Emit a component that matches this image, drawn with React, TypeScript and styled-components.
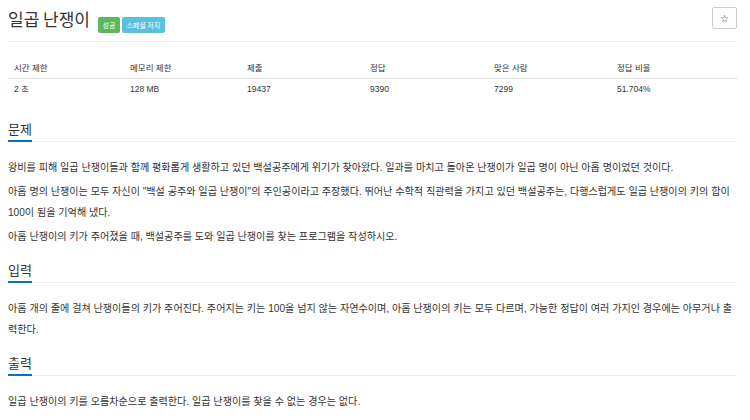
import React from "react";
import styled, { createGlobalStyle } from "styled-components";

const GlobalStyle = createGlobalStyle`
  html, body {
    margin: 0;
    padding: 0;
    background: #ffffff;
  }
  body {
    font-family: "Liberation Sans", "Noto Sans CJK KR", sans-serif;
    color: #333333;
  }
`;

const Page = styled.div`
  width: 750px;
  padding: 0 13px 0 8px;
  box-sizing: border-box;
`;

const Header = styled.div`
  display: flex;
  align-items: center;
  justify-content: space-between;
  padding-top: 7px;
  height: 22px;
`;

const TitleRow = styled.div`
  display: flex;
  align-items: baseline;
  gap: 2px;
`;

const Title = styled.h1`
  margin: 0 6px 0 0;
  font-family: "Noto Sans CJK KR", sans-serif;
  font-size: 17px;
  font-weight: 400;
  line-height: 22px;
  color: #333333;
  position: relative;
  top: 1px;
`;

const Label = styled.span<{ $tone: "success" | "info" }>`
  display: inline-flex;
  align-items: center;
  height: 16px;
  padding: 0 4.5px;
  border-radius: 2px;
  font-family: "Noto Sans CJK KR", sans-serif;
  font-size: 7px;
  color: #ffffff;
  background: ${(p) => (p.$tone === "success" ? "#5cb85c" : "#5bc0de")};
  position: relative;
  top: 3px;
`;

const StarButton = styled.button`
  width: 25px;
  height: 22px;
  padding: 0;
  border: 1px solid #cccccc;
  border-radius: 2px;
  background: #ffffff;
  font-family: "DejaVu Sans", sans-serif;
  font-size: 10px;
  color: #222222;
  display: flex;
  align-items: center;
  justify-content: center;
`;

const Rule = styled.hr`
  margin: 12px 0 0;
  border: 0;
  border-top: 1px solid #eeeeee;
`;

const InfoTable = styled.table`
  width: 100%;
  margin: 16px 0 21px;
  border-collapse: collapse;
  table-layout: fixed;
  font-size: 8.5px;
`;

const Col = styled.col<{ $w?: number }>`
  width: ${(p) => (p.$w ? `${p.$w}px` : "auto")};
`;

const Th = styled.th`
  text-align: left;
  font-weight: 400;
  padding: 4px 6px;
  line-height: 12px;
  border-bottom: 1px solid #dddddd;
`;

const Td = styled.td`
  padding: 4px 6px;
  line-height: 12px;
`;

const Section = styled.section`
  margin-top: 14px;
`;

const Headline = styled.div`
  border-bottom: 1px solid #eeeeee;
  margin-bottom: 15px;
`;

const HeadlineText = styled.h2`
  display: inline-block;
  margin: 0 0 -1px;
  padding-bottom: 2px;
  font-family: "Noto Sans CJK KR", sans-serif;
  font-size: 13px;
  font-weight: 400;
  line-height: 18px;
  color: #333333;
  border-bottom: 2px solid #0076c0;
`;

const Para = styled.p`
  margin: 0 0 3px;
  font-size: 10.1px;
  line-height: 21px;
  color: #333333;
`;

const stats = [
  { label: "시간 제한", value: "2 초", w: 116 },
  { label: "메모리 제한", value: "128 MB", w: 117 },
  { label: "제출", value: "19437", w: 123 },
  { label: "정답", value: "9390", w: 124 },
  { label: "맞은 사람", value: "7299", w: 123 },
  { label: "정답 비율", value: "51.704%", w: 0 },
];

const sections = [
  {
    title: "문제",
    paras: [
      "왕비를 피해 일곱 난쟁이들과 함께 평화롭게 생활하고 있던 백설공주에게 위기가 찾아왔다. 일과를 마치고 돌아온 난쟁이가 일곱 명이 아닌 아홉 명이었던 것이다.",
      "아홉 명의 난쟁이는 모두 자신이 \"백설 공주와 일곱 난쟁이\"의 주인공이라고 주장했다. 뛰어난 수학적 직관력을 가지고 있던 백설공주는, 다행스럽게도 일곱 난쟁이의 키의 합이 100이 됨을 기억해 냈다.",
      "아홉 난쟁이의 키가 주어졌을 때, 백설공주를 도와 일곱 난쟁이를 찾는 프로그램을 작성하시오.",
    ],
  },
  {
    title: "입력",
    paras: [
      "아홉 개의 줄에 걸쳐 난쟁이들의 키가 주어진다. 주어지는 키는 100을 넘지 않는 자연수이며, 아홉 난쟁이의 키는 모두 다르며, 가능한 정답이 여러 가지인 경우에는 아무거나 출력한다.",
    ],
  },
  {
    title: "출력",
    paras: [
      "일곱 난쟁이의 키를 오름차순으로 출력한다. 일곱 난쟁이를 찾을 수 없는 경우는 없다.",
    ],
  },
];

export default function App() {
  return (
    <>
      <GlobalStyle />
      <Page>
        <Header>
          <TitleRow>
            <Title>일곱 난쟁이</Title>
            <Label $tone="success">성공</Label>
            <Label $tone="info">스페셜 저지</Label>
          </TitleRow>
          <StarButton aria-label="즐겨찾기">☆</StarButton>
        </Header>
        <Rule />
        <InfoTable>
          <colgroup>
            {stats.map((s) => (
              <Col key={s.label} $w={s.w} />
            ))}
          </colgroup>
          <thead>
            <tr>
              {stats.map((s) => (
                <Th key={s.label}>{s.label}</Th>
              ))}
            </tr>
          </thead>
          <tbody>
            <tr>
              {stats.map((s) => (
                <Td key={s.label}>{s.value}</Td>
              ))}
            </tr>
          </tbody>
        </InfoTable>
        {sections.map((sec) => (
          <Section key={sec.title}>
            <Headline>
              <HeadlineText>{sec.title}</HeadlineText>
            </Headline>
            {sec.paras.map((p, i) => (
              <Para key={i}>{p}</Para>
            ))}
          </Section>
        ))}
      </Page>
    </>
  );
}
